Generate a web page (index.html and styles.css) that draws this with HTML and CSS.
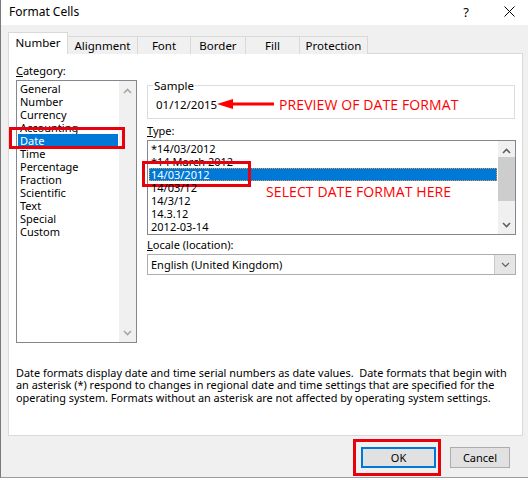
FILE: index.html
```html
<!DOCTYPE html>
<html>
<head>
<meta charset="utf-8">
<link rel="stylesheet" href="styles.css">
</head>
<body>
<div class="window">
  <div class="titlebar">
    <span class="title">Format Cells</span>
    <div class="title-btns">
      <span class="help">?</span>
      <svg class="close" width="11" height="11" viewBox="0 0 11 11"><path d="M0.5 0.5 L10.5 10.5 M10.5 0.5 L0.5 10.5" stroke="#000" stroke-width="1" fill="none"/></svg>
    </div>
  </div>
  <div class="body">
    <div class="tabs">
      <div class="tab active">Number</div>
      <div class="tab">Alignment</div>
      <div class="tab">Font</div>
      <div class="tab">Border</div>
      <div class="tab">Fill</div>
      <div class="tab">Protection</div>
    </div>
    <div class="panel">
      <div class="left">
        <div class="label"><u>C</u>ategory:</div>
        <div class="listbox cat">
          <div class="items">
            <div class="item">General</div>
            <div class="item">Number</div>
            <div class="item">Currency</div>
            <div class="item">Accounting</div>
            <div class="item sel marked-date">Date</div>
            <div class="item">Time</div>
            <div class="item">Percentage</div>
            <div class="item">Fraction</div>
            <div class="item">Scientific</div>
            <div class="item">Text</div>
            <div class="item">Special</div>
            <div class="item">Custom</div>
          </div>
          <div class="vscroll disabled">
            <svg width="9" height="6" viewBox="0 0 9 6"><path d="M1 5 L4.5 1.5 L8 5" stroke="#a6a6a6" stroke-width="1.6" fill="none"/></svg>
            <div class="track"></div>
            <svg width="9" height="6" viewBox="0 0 9 6"><path d="M1 1 L4.5 4.5 L8 1" stroke="#a6a6a6" stroke-width="1.6" fill="none"/></svg>
          </div>
        </div>
      </div>
      <div class="right">
        <fieldset class="sample">
          <legend>Sample</legend>
          <div class="sample-row">
            <span class="sample-val">01/12/2015</span>
            <svg class="arrow" width="58" height="12" viewBox="0 0 58 12"><path d="M15 6 H57" stroke="#ff0000" stroke-width="3"/><path d="M0 6 L16 1 L16 11 Z" fill="#ff0000"/></svg>
            <span class="note">PREVIEW OF DATE FORMAT</span>
          </div>
        </fieldset>
        <div class="label type-label"><u>T</u>ype:</div>
        <div class="listbox type">
          <div class="items">
            <div class="item">*14/03/2012</div>
            <div class="item">*14 March 2012</div>
            <div class="item sel focus marked-type">14/03/2012</div>
            <div class="item note-row">14/03/12<span class="note note2">SELECT DATE FORMAT HERE</span></div>
            <div class="item">14/3/12</div>
            <div class="item">14.3.12</div>
            <div class="item">2012-03-14</div>
          </div>
          <div class="vscroll">
            <svg width="9" height="6" viewBox="0 0 9 6"><path d="M1 5 L4.5 1.5 L8 5" stroke="#606060" stroke-width="1.6" fill="none"/></svg>
            <div class="track"><div class="thumb"></div></div>
            <svg width="9" height="6" viewBox="0 0 9 6"><path d="M1 1 L4.5 4.5 L8 1" stroke="#606060" stroke-width="1.6" fill="none"/></svg>
          </div>
        </div>
        <div class="label locale-label"><u>L</u>ocale (location):</div>
        <div class="combo">
          <span class="combo-val">English (United Kingdom)</span>
          <div class="combo-btn">
            <svg width="9" height="6" viewBox="0 0 9 6"><path d="M1 1 L4.5 4.5 L8 1" stroke="#606060" stroke-width="1.2" fill="none"/></svg>
          </div>
        </div>
      </div>
      <p class="desc">Date formats display date and time serial numbers as date values.&nbsp; Date formats that begin with an asterisk (*) respond to changes in regional date and time settings that are specified for the operating system. Formats without an asterisk are not affected by operating system settings.</p>
    </div>
    <div class="buttons">
      <div class="btn ok marked-ok">OK</div>
      <div class="btn">Cancel</div>
    </div>
  </div>
</div>
</body>
</html>
```
FILE: styles.css
```css
*, *::before, *::after { box-sizing: border-box; }
html, body { margin: 0; padding: 0; }
body {
  width: 528px;
  height: 480px;
  overflow: hidden;
  background: #ffffff;
  font-family: "Noto Sans", "Segoe UI", sans-serif;
  font-size: 11px;
  color: #000;
}
.window {
  width: 528px;
  height: 478px;
  background: #f0f0f0;
  border-left: 1px solid #7a7a7a;
  border-bottom: 1px solid #9a9a9a;
  display: flex;
  flex-direction: column;
}
.titlebar {
  height: 25px;
  background: #ffffff;
  display: flex;
  align-items: center;
  justify-content: space-between;
  padding: 0 13px 2px 8px;
  font-size: 12px;
}
.title-btns { display: flex; align-items: center; gap: 35px; }
.help { font-size: 13px; }
.close { display: block; }
.body {
  padding: 8px 5px 0 7px;
  flex: 1;
  display: flex;
  flex-direction: column;
}
.tabs {
  display: flex;
  align-items: flex-end;
  height: 21px;
  position: relative;
  z-index: 1;
  margin-bottom: -1px;
  font-size: 11.5px;
}
.tab {
  height: 18px;
  border: 1px solid #d9d9d9;
  border-bottom: none;
  border-left: none;
  padding: 0 6px;
  display: flex;
  align-items: center;
  justify-content: center;
  background: #f0f0f0;
  line-height: 1;
}
.tab:nth-child(2) { width: 70px; }
.tab:nth-child(3) { width: 53px; }
.tab:nth-child(4) { width: 55px; }
.tab:nth-child(5) { width: 54px; }
.tab:nth-child(6) { width: 68px; }
.tab.active {
  width: 60px;
  height: 22px;
  background: #fff;
  border-left: 1px solid #d9d9d9;
  padding-bottom: 2px;
}
.panel {
  width: 515px;
  height: 383px;
  background: #fff;
  border: 1px solid #d9d9d9;
  padding: 10px 6px 0 7px;
  display: grid;
  grid-template-columns: 121px 1fr;
  grid-template-rows: auto 1fr;
  column-gap: 10px;
}
.label { line-height: 14px; }
.listbox {
  border: 1px solid #828790;
  display: flex;
  background: #fff;
}
.listbox.cat { height: 263px; margin-top: 2px; }
.items { flex: 1; padding: 1px 1px 0 1px; min-width: 0; }
.item {
  height: 13px;
  line-height: 13px;
  padding-left: 2px;
  white-space: nowrap;
  position: relative;
}
.item.sel { background: #0078d7; color: #fff; }
.item.focus { outline: 1px dotted #e0a040; outline-offset: -1px; }
.vscroll {
  width: 17px;
  background: #f0f0f0;
  display: flex;
  flex-direction: column;
  align-items: center;
  padding: 7px 0 6px;
}
.vscroll .track { flex: 1; width: 100%; padding: 2px 0 0; }
.vscroll svg { display: block; }
.thumb { height: 44px; background: #cdcdcd; margin: 1px 0 0; }
.marked-date::after,
.marked-type::after,
.marked-ok::after {
  content: "";
  position: absolute;
  border: 3px solid #e8000b;
  pointer-events: none;
}
.marked-date::after { left: -9px; right: -7px; top: -7px; bottom: -2px; }
.marked-type::after { left: -7px; top: -7px; width: 109px; bottom: -6px; }
.sample {
  margin: 15px 1px 0 0;
  padding: 0 6px 4px;
  border: 1px solid #dcdcdc;
  min-width: 0;
}
.sample legend { padding: 0 1px; margin-left: -1px; line-height: 13px; font-size: 11.5px; }
.sample-row { display: flex; align-items: center; height: 20px; margin-top: 2px; font-size: 11.5px; }
.sample-val { width: 63px; padding-left: 2px; }
.arrow { display: block; margin-left: 0; }
.note {
  color: #ff0000;
  font-family: "Open Sans", "Noto Sans", sans-serif;
  font-size: 14px;
  letter-spacing: 0.1px;
  margin-left: 4px;
  white-space: nowrap;
}
.type-label { margin-top: 5px; }
.listbox.type { height: 95px; margin-top: 2px; }
.note-row { overflow: visible; }
.note2 { position: absolute; left: 117px; top: 4px; margin-left: 0; }
.locale-label { margin-top: 3px; }
.combo {
  height: 21px;
  margin-top: 2px;
  border: 1px solid #adadad;
  display: flex;
  align-items: center;
  background: #fff;
}
.combo-val { flex: 1; padding-left: 3px; }
.combo-btn {
  width: 21px;
  height: 100%;
  background: #e5e5e5;
  border-left: 1px solid #c8c8c8;
  display: flex;
  align-items: center;
  justify-content: center;
}
.desc {
  grid-column: 1 / 3;
  margin: 0;
  align-self: end;
  line-height: 12.8px;
  padding-bottom: 30px;
  padding-right: 0;
  font-size: 10.9px;
}
.buttons {
  display: flex;
  justify-content: flex-end;
  gap: 14px;
  padding: 11px 13px 0 0;
  width: 515px;
}
.btn {
  height: 21px;
  background: #e1e1e1;
  border: 1px solid #adadad;
  display: flex;
  align-items: center;
  justify-content: center;
  width: 60px;
  position: relative;
}
.btn.ok { width: 75px; border: 2px solid #0078d7; }
.marked-ok::after { left: -10px; right: -7px; top: -10px; bottom: -10px; }
```
